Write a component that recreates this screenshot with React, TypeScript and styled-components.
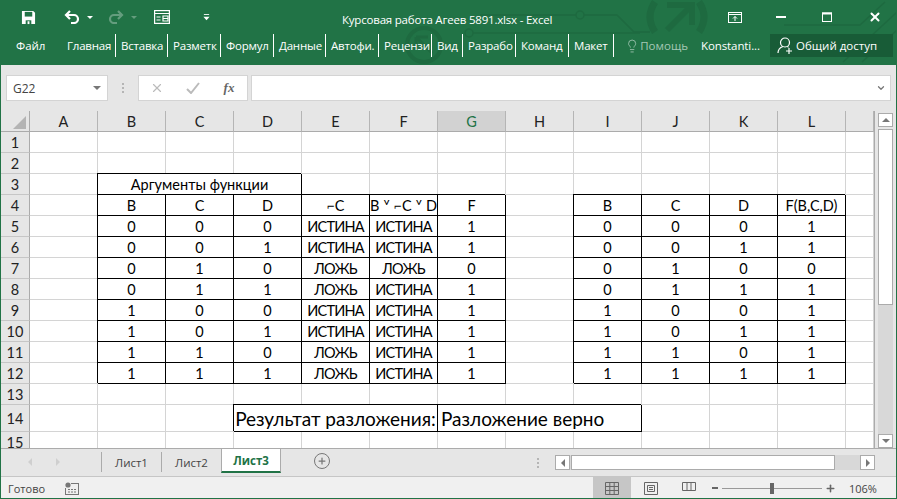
import { createGlobalStyle, styled } from "styled-components";
import { ChevronDown, Lightbulb, Plus, X } from "lucide-react";

const GlobalStyle = createGlobalStyle`
  html, body {
    margin: 0;
    padding: 0;
    overflow: hidden;
    background: #e6e6e6;
  }
`;

const ui = `"Open Sans", "Noto Sans", sans-serif`;
const cellFont = `Lato, "Liberation Sans", sans-serif`;

const Window = styled.div`
  width: 897px;
  height: 499px;
  box-sizing: border-box;
  border: 1px solid #217346;
  border-top: 0;
  display: flex;
  flex-direction: column;
  background: #e6e6e6;
  overflow: hidden;
`;

/* title bar + ribbon tabs */
const Head = styled.header`
  position: relative;
  height: 65px;
  margin: 0 -1px;
  flex: none;
  background: #217346;
  color: #fff;
  font-family: ${ui};
  display: flex;
  flex-direction: column;
`;
const Pattern = styled.svg`
  position: absolute;
  inset: 0;
  pointer-events: none;
`;
const TitleRow = styled.div`
  position: relative;
  height: 34px;
  display: flex;
  align-items: center;
`;
const Qat = styled.div`
  width: 330px;
  flex: none;
  padding-left: 21px;
  box-sizing: border-box;
  display: flex;
  align-items: center;
  height: 30px;
`;
const QatButton = styled.span<{ $w: number; $dim?: boolean }>`
  width: ${(p) => p.$w}px;
  flex: none;
  display: flex;
  align-items: center;
  opacity: ${(p) => (p.$dim ? 0.3 : 1)};
`;
const QatCaret = styled.span`
  width: 0;
  height: 0;
  border-left: 3px solid transparent;
  border-right: 3px solid transparent;
  border-top: 3px solid #fff;
`;
const Title = styled.div`
  width: 272px;
  flex: none;
  padding: 5px 0 0 12px;
  box-sizing: border-box;
  font-size: 11.5px;
  letter-spacing: -0.2px;
  white-space: nowrap;
`;
const WinButtons = styled.div`
  margin-left: auto;
  height: 30px;
  width: 169px;
  flex: none;
  display: flex;
  align-items: center;
`;
const WinButton = styled.span<{ $w: number }>`
  width: ${(p) => p.$w}px;
  flex: none;
  display: flex;
  align-items: center;
`;
const TabRow = styled.nav`
  position: relative;
  height: 23px;
  display: flex;
  align-items: center;
  font-size: 11.5px;
`;
const FileTab = styled.span`
  width: 62px;
  flex: none;
  padding-left: 16px;
  box-sizing: border-box;
`;
const RibbonTab = styled.span<{ $w: number }>`
  width: ${(p) => p.$w}px;
  height: 23px;
  line-height: 23px;
  flex: none;
  box-sizing: border-box;
  padding-left: 5px;
  overflow: hidden;
  white-space: nowrap;
  border-right: 1px solid #fff;
  letter-spacing: -0.2px;
`;
const Help = styled.span`
  width: 63px;
  flex: none;
  margin-left: 11px;
  display: flex;
  align-items: center;
  gap: 1px;
  overflow: hidden;
  white-space: nowrap;
  color: #a5c8b5;
`;
const User = styled.span`
  width: 69px;
  flex: none;
  margin-left: 13px;
  white-space: nowrap;
  letter-spacing: -0.1px;
`;
const Share = styled.span`
  width: 123px;
  height: 23px;
  flex: none;
  background: #185c37;
  display: flex;
  align-items: center;
  gap: 3px;
  padding-left: 7px;
  box-sizing: border-box;
  white-space: nowrap;
`;

/* name box and formula bar */
const FormulaRow = styled.div`
  height: 46px;
  flex: none;
  box-sizing: border-box;
  padding: 10px 5px;
  display: flex;
  font-family: ${ui};
  color: #444;
`;
const NameBox = styled.div`
  width: 102px;
  flex: none;
  box-sizing: border-box;
  background: #fff;
  border: 1px solid #d4d4d4;
  padding: 0 6px;
  font-size: 12px;
  display: flex;
  align-items: center;
  justify-content: space-between;
`;
const Caret = styled.span`
  width: 0;
  height: 0;
  border-left: 4px solid transparent;
  border-right: 4px solid transparent;
  border-top: 4px solid #777;
`;
const Grip = styled.div`
  width: 30px;
  flex: none;
  display: flex;
  flex-direction: column;
  align-items: center;
  justify-content: center;
  gap: 2px;
`;
const GripDot = styled.i`
  width: 2px;
  height: 2px;
  background: #b5b5b5;
`;
const FxBox = styled.div`
  width: 110px;
  flex: none;
  box-sizing: border-box;
  background: #fff;
  border: 1px solid #d4d4d4;
  display: flex;
  align-items: center;
  color: #bbb;
`;
const FxSlot = styled.span`
  width: 36px;
  flex: none;
  display: flex;
  justify-content: center;
`;
const FxLabel = styled.span`
  font-family: "Liberation Serif", serif;
  font-style: italic;
  font-weight: 700;
  font-size: 13px;
  color: #666;
`;
const FormulaInput = styled.div`
  flex: 1;
  margin-left: 3px;
  box-sizing: border-box;
  background: #fff;
  border: 1px solid #d4d4d4;
  display: flex;
  align-items: center;
  justify-content: flex-end;
  padding-right: 4px;
  color: #777;
`;

/* sheet */
const SheetArea = styled.div`
  height: 337px;
  flex: none;
  display: flex;
  overflow: hidden;
`;
const Grid = styled.div`
  width: 873px;
  flex: none;
  display: grid;
  grid-template-columns: 29px repeat(12, 68px) 28px;
  grid-template-rows: 21px repeat(13, 21px) 27px 21px;
  background: #fff;
  font-family: ${cellFont};
  font-size: 14.5px;
  color: #000;
  overflow: hidden;
  align-content: start;
  border-right: 1px solid #ababab;
`;
const Corner = styled.div`
  background: #e6e6e6;
  border-right: 1px solid #ababab;
  border-bottom: 1px solid #ababab;
  box-sizing: border-box;
  display: flex;
  align-items: flex-end;
  justify-content: flex-end;
  padding: 0 3px 2px 0;
`;
const CornerMark = styled.span`
  width: 0;
  height: 0;
  border-left: 13px solid transparent;
  border-bottom: 13px solid #b4b4b4;
`;
const ColHead = styled.div<{ $active?: boolean }>`
  background: ${(p) => (p.$active ? "#d2d2d2" : "#e6e6e6")};
  color: ${(p) => (p.$active ? "#217346" : "#222")};
  border-right: 1px solid #b5b5b5;
  border-bottom: 1px solid #ababab;
  box-sizing: border-box;
  display: flex;
  align-items: center;
  justify-content: center;
`;
const RowHead = styled.div`
  background: #e6e6e6;
  color: #222;
  border-right: 1px solid #ababab;
  border-bottom: 1px solid #c6c6c6;
  box-sizing: border-box;
  display: flex;
  align-items: center;
  justify-content: center;
`;
const Cell = styled.div<{ $span?: number; $boxed?: boolean; $big?: boolean; $left?: boolean; $tight?: boolean }>`
  grid-column: span ${(p) => p.$span ?? 1};
  position: ${(p) => (p.$boxed ? "relative" : "static")};
  z-index: ${(p) => (p.$boxed ? 1 : 0)};
  box-sizing: border-box;
  border-right: 1px solid ${(p) => (p.$boxed ? "#000" : "#d4d4d4")};
  border-bottom: 1px solid ${(p) => (p.$boxed ? "#000" : "#d4d4d4")};
  box-shadow: ${(p) => (p.$boxed ? "-1px -1px 0 0 #000" : "none")};
  display: flex;
  align-items: center;
  justify-content: ${(p) => (p.$left ? "flex-start" : "center")};
  padding-left: ${(p) => (p.$left ? 3 : 0)}px;
  font-size: ${(p) => (p.$big ? 19 : 14.5)}px;
  letter-spacing: ${(p) => (p.$tight ? -0.8 : 0)}px;
  white-space: nowrap;
  overflow: hidden;
`;

/* vertical scrollbar */
const VScroll = styled.div`
  flex: 1;
  padding: 2px 3px 0;
  display: flex;
  flex-direction: column;
  background: #e6e6e6;
`;
const ScrollButton = styled.div<{ $w?: number; $h?: number }>`
  width: ${(p) => (p.$w ? `${p.$w}px` : "auto")};
  height: ${(p) => (p.$h ? `${p.$h}px` : "auto")};
  flex: none;
  box-sizing: border-box;
  background: #fff;
  border: 1px solid #ababab;
  display: flex;
  align-items: center;
  justify-content: center;
`;
const Tri = styled.span<{ $dir: "up" | "down" | "left" | "right" }>`
  width: 0;
  height: 0;
  ${(p) =>
    p.$dir === "up" || p.$dir === "down"
      ? `border-left: 4px solid transparent; border-right: 4px solid transparent;
         border-${p.$dir === "up" ? "bottom" : "top"}: 4px solid #777;`
      : `border-top: 4px solid transparent; border-bottom: 4px solid transparent;
         border-${p.$dir === "left" ? "right" : "left"}: 4px solid #777;`}
`;
const VThumb = styled.div`
  height: 176px;
  flex: none;
  margin-top: 2px;
  box-sizing: border-box;
  background: #fff;
  border: 1px solid #ababab;
`;
const VTrack = styled.div`
  flex: 1;
  background: #d8d8d8;
`;

/* sheet tabs */
const SheetBar = styled.div`
  height: 28px;
  flex: none;
  box-sizing: border-box;
  display: flex;
  align-items: flex-start;
  border-top: 1px solid #ababab;
  font-family: ${ui};
  color: #444;
  font-size: 11.5px;
`;
const SheetNav = styled.div`
  width: 101px;
  height: 20px;
  flex: none;
  display: flex;
  align-items: center;
  padding-left: 27px;
  gap: 24px;
  box-sizing: border-box;
  border-right: 1px solid #ababab;
  margin-top: 3px;
`;
const NavArrow = styled.span`
  width: 0;
  height: 0;
  border-top: 4px solid transparent;
  border-bottom: 4px solid transparent;
`;
const NavLeft = styled(NavArrow)`
  border-right: 4px solid #cfcfcf;
`;
const NavRight = styled(NavArrow)`
  border-left: 4px solid #cfcfcf;
`;
const SheetTab = styled.span<{ $w: number; $plain?: boolean }>`
  width: ${(p) => p.$w}px;
  height: 20px;
  margin-top: 3px;
  flex: none;
  box-sizing: border-box;
  border-right: ${(p) => (p.$plain ? "0" : "1px solid #ababab")};
  display: flex;
  align-items: center;
  justify-content: center;
`;
const ActiveSheetTab = styled.span`
  width: 60px;
  height: 24px;
  flex: none;
  box-sizing: border-box;
  background: #fff;
  border: 1px solid #ababab;
  border-top: 0;
  border-bottom: 2px solid #217346;
  color: #217346;
  font-weight: 700;
  display: flex;
  align-items: center;
  justify-content: center;
`;
const AddSheet = styled.span`
  width: 16px;
  height: 16px;
  margin: 4px 0 0 33px;
  flex: none;
  box-sizing: border-box;
  border: 1.5px solid #777;
  border-radius: 50%;
  display: flex;
  align-items: center;
  justify-content: center;
  color: #777;
`;
const HGrip = styled(Grip)`
  width: 16px;
  margin: 5px 0 0 200px;
  height: 18px;
`;
const HScroll = styled.div`
  width: 320px;
  margin: 6px 0 0 9px;
  height: 15px;
  flex: none;
  display: flex;
  background: #d8d8d8;
`;
const HThumb = styled.div`
  width: 264px;
  flex: none;
  box-sizing: border-box;
  background: #fff;
  border: 1px solid #ababab;
  margin-left: 1px;
`;
const HGap = styled.div`
  flex: 1;
`;

/* status bar */
const StatusBar = styled.footer`
  flex: 1;
  box-sizing: border-box;
  background: #f0f0f0;
  border-top: 1px solid #c6c6c6;
  display: flex;
  align-items: center;
  font-family: ${ui};
  font-size: 11px;
  color: #444;
`;
const Ready = styled.span`
  width: 64px;
  flex: none;
  padding-left: 7px;
  box-sizing: border-box;
`;
const StatusSpacer = styled.div`
  flex: 1;
`;
const ViewButton = styled.span<{ $active?: boolean }>`
  width: 38.3px;
  height: 22px;
  flex: none;
  background: ${(p) => (p.$active ? "#c6c6c6" : "transparent")};
  display: flex;
  align-items: center;
  justify-content: center;
`;
const Slider = styled.div`
  width: 100px;
  height: 1px;
  flex: none;
  background: #999;
  display: flex;
  align-items: center;
  justify-content: center;
`;
const SliderThumb = styled.span`
  width: 4px;
  height: 11px;
  background: #666;
`;
const ZoomSign = styled.span<{ $w: number }>`
  width: ${(p) => p.$w}px;
  flex: none;
  display: flex;
  justify-content: center;
  color: #666;
`;
const ZoomValue = styled.span`
  width: 57px;
  flex: none;
  padding-left: 10px;
  box-sizing: border-box;
`;

const columns = ["A", "B", "C", "D", "E", "F", "G", "H", "I", "J", "K", "L"];

const rows = [
  ["0", "0", "0", "ИСТИНА", "ИСТИНА", "1", "0", "0", "0", "1"],
  ["0", "0", "1", "ИСТИНА", "ИСТИНА", "1", "0", "0", "1", "1"],
  ["0", "1", "0", "ЛОЖЬ", "ЛОЖЬ", "0", "0", "1", "0", "0"],
  ["0", "1", "1", "ЛОЖЬ", "ИСТИНА", "1", "0", "1", "1", "1"],
  ["1", "0", "0", "ИСТИНА", "ИСТИНА", "1", "1", "0", "0", "1"],
  ["1", "0", "1", "ИСТИНА", "ИСТИНА", "1", "1", "0", "1", "1"],
  ["1", "1", "0", "ЛОЖЬ", "ИСТИНА", "1", "1", "1", "0", "1"],
  ["1", "1", "1", "ЛОЖЬ", "ИСТИНА", "1", "1", "1", "1", "1"],
];

function Blank({ n }: { n: number }) {
  return (
    <>
      {Array.from({ length: n }, (_, i) => (
        <Cell key={i} />
      ))}
    </>
  );
}

function Row({ n, values }: { n: number; values: string[] }) {
  return (
    <>
      <RowHead>{n}</RowHead>
      <Cell />
      {values.slice(0, 6).map((v, i) => (
        <Cell key={i} $boxed $tight={v.length > 1}>
          {v}
        </Cell>
      ))}
      <Cell />
      {values.slice(6).map((v, i) => (
        <Cell key={i} $boxed>
          {v}
        </Cell>
      ))}
      <Cell />
    </>
  );
}

function SheetGrid() {
  return (
    <Grid>
      <Corner>
        <CornerMark />
      </Corner>
      {columns.map((c) => (
        <ColHead key={c} $active={c === "G"}>
          {c}
        </ColHead>
      ))}
      <ColHead />

      <RowHead>1</RowHead>
      <Blank n={13} />
      <RowHead>2</RowHead>
      <Blank n={13} />

      <RowHead>3</RowHead>
      <Cell />
      <Cell $span={3} $boxed>
        Аргументы функции
      </Cell>
      <Blank n={9} />

      <RowHead>4</RowHead>
      <Cell />
      <Cell $boxed>B</Cell>
      <Cell $boxed>C</Cell>
      <Cell $boxed>D</Cell>
      <Cell $boxed>⌐C</Cell>
      <Cell $boxed>B ˅ ⌐C ˅ D</Cell>
      <Cell $boxed>F</Cell>
      <Cell />
      <Cell $boxed>B</Cell>
      <Cell $boxed>C</Cell>
      <Cell $boxed>D</Cell>
      <Cell $boxed>F(B,C,D)</Cell>
      <Cell />

      {rows.map((row, i) => (
        <Row key={i} n={i + 5} values={row} />
      ))}

      <RowHead>13</RowHead>
      <Blank n={13} />

      <RowHead>14</RowHead>
      <Blank n={3} />
      <Cell $span={3} $boxed $big>
        Результат разложения:
      </Cell>
      <Cell $span={3} $boxed $big $left>
        Разложение верно
      </Cell>
      <Blank n={4} />

      <RowHead>15</RowHead>
      <Blank n={13} />
    </Grid>
  );
}

export default function App() {
  return (
    <Window>
      <GlobalStyle />
      <Head>
        <Pattern width="897" height="65" viewBox="0 0 897 65" fill="none" stroke="#1e6a40" strokeWidth="1.5">
          <path d="M655 2 Q645 17 655 32" strokeWidth="7" />
          <path d="M699 2 Q709 17 699 32" strokeWidth="7" />
          <path d="M667 30 L692 5 M667 5 H692 V25" strokeWidth="6" />
          <path d="M480 15 H576 M584 15 H617 L634 32 H650" />
          <circle cx="580" cy="15" r="4" />
          <path d="M473 33 H560 L590 33 H640" />
          <circle cx="469" cy="33" r="4" />
          <path d="M784 25 H860 L885 2 M843 62 L897 12 M862 62 L897 30" />
          <circle cx="424" cy="45" r="17" strokeWidth="4" />
          <path d="M416 37 H428 M416 37 V49 M416 37 L432 53" strokeWidth="3" />
        </Pattern>
        <TitleRow>
          <Qat>
            <QatButton $w={43}>
              <svg width="15" height="15" viewBox="0 0 16 16">
                <path d="M1 1h12l2 2v12H1z" fill="#fff" />
                <rect x="4" y="2" width="8" height="5" fill="#217346" />
                <rect x="5" y="11" width="6" height="4" fill="#217346" />
                <rect x="7" y="12" width="2" height="3" fill="#fff" />
              </svg>
            </QatButton>
            <QatButton $w={23}>
              <svg width="16" height="14" viewBox="0 0 16 14" fill="none" stroke="#fff" strokeWidth="2.2">
                <path d="M2 5h8a4 4 0 0 1 0 8H7" />
                <path d="M6 1 2 5l4 4" />
              </svg>
            </QatButton>
            <QatButton $w={21}>
              <QatCaret />
            </QatButton>
            <QatButton $w={23} $dim>
              <svg width="16" height="14" viewBox="0 0 16 14" fill="none" stroke="#fff" strokeWidth="2.2">
                <path d="M14 5H6a4 4 0 0 0 0 8h3" />
                <path d="m10 1 4 4-4 4" />
              </svg>
            </QatButton>
            <QatButton $w={23} $dim>
              <QatCaret />
            </QatButton>
            <QatButton $w={49}>
              <svg width="16" height="14" viewBox="0 0 16 14" fill="none" stroke="#fff" strokeWidth="1.2">
                <rect x="0.6" y="0.6" width="14.8" height="12.8" />
                <path d="M0.6 3.5h14.8M2.5 7h4M9 6h5v5H9zM9 8.5h5M2.5 10h4" />
              </svg>
            </QatButton>
            <QatButton $w={12}>
              <svg width="7" height="7" viewBox="0 0 8 8" fill="#fff">
                <rect x="1" y="0" width="6" height="1" />
                <path d="M0.5 3h7L4 7z" />
              </svg>
            </QatButton>
          </Qat>
          <Title>Курсовая работа Агеев 5891.xlsx - Excel</Title>
          <WinButtons>
            <WinButton $w={48}>
              <svg width="14" height="11" viewBox="0 0 14 11" fill="none" stroke="#fff">
                <rect x="0.5" y="0.5" width="13" height="10" />
                <path d="M0.5 2.500h13M7 9V4.500M5 6.500l2-2 2 2" />
              </svg>
            </WinButton>
            <WinButton $w={46}>
              <svg width="10" height="2" viewBox="0 0 10 2">
                <rect width="10" height="2" fill="#fff" />
              </svg>
            </WinButton>
            <WinButton $w={46}>
              <svg width="10" height="10" viewBox="0 0 10 10" fill="none" stroke="#fff">
                <rect x="0.5" y="1" width="9" height="8.500" strokeWidth="1" />
                <path d="M0 1.500h10" strokeWidth="2" />
              </svg>
            </WinButton>
            <WinButton $w={20}>
              <X size={14} strokeWidth={3.4} color="#fff" />
            </WinButton>
          </WinButtons>
        </TitleRow>
        <TabRow>
          <FileTab>Файл</FileTab>
          {[
            ["Главная", 54],
            ["Вставка", 52],
            ["Разметк", 53],
            ["Формул", 53],
            ["Данные", 52],
            ["Автофи.", 53],
            ["Рецензи", 53],
            ["Вид", 31],
            ["Разрабо", 53],
            ["Команд", 53],
            ["Макет", 45],
          ].map(([label, w]) => (
            <RibbonTab key={label} $w={w as number}>
              {label}
            </RibbonTab>
          ))}
          <Help>
            <Lightbulb size={16} strokeWidth={1.4} />
            Помощь
          </Help>
          <User>Konstanti...</User>
          <Share>
            <svg width="16" height="17" viewBox="0 0 16 17" fill="none" stroke="#fff" strokeWidth="1.2">
              <circle cx="8" cy="5.500" r="4.500" />
              <path d="M1 16c0-3 2-5.500 5-6.500M10 9.500c.6.2 1.100.4 1.600.8M9 14h6M12 11v6" />
            </svg>
            Общий доступ
          </Share>
        </TabRow>
      </Head>

      <FormulaRow>
        <NameBox>
          G22
          <Caret />
        </NameBox>
        <Grip>
          <GripDot />
          <GripDot />
          <GripDot />
        </Grip>
        <FxBox>
          <FxSlot>
            <X size={14} strokeWidth={2} />
          </FxSlot>
          <FxSlot>
            <svg width="14" height="12" viewBox="0 0 14 12" fill="none" stroke="#bbb" strokeWidth="2">
              <path d="m1 7 4 4 8-10" />
            </svg>
          </FxSlot>
          <FxSlot>
            <FxLabel>fx</FxLabel>
          </FxSlot>
        </FxBox>
        <FormulaInput>
          <ChevronDown size={10} strokeWidth={3} />
        </FormulaInput>
      </FormulaRow>

      <SheetArea>
        <SheetGrid />
        <VScroll>
          <ScrollButton $h={14}>
            <Tri $dir="up" />
          </ScrollButton>
          <VThumb />
          <VTrack />
          <ScrollButton $h={14}>
            <Tri $dir="down" />
          </ScrollButton>
        </VScroll>
      </SheetArea>

      <SheetBar>
        <SheetNav>
          <NavLeft />
          <NavRight />
        </SheetNav>
        <SheetTab $w={60}>Лист1</SheetTab>
        <SheetTab $w={59} $plain>
          Лист2
        </SheetTab>
        <ActiveSheetTab>Лист3</ActiveSheetTab>
        <AddSheet>
          <Plus size={10} strokeWidth={3} />
        </AddSheet>
        <HGrip>
          <GripDot />
          <GripDot />
          <GripDot />
        </HGrip>
        <HScroll>
          <ScrollButton $w={15}>
            <Tri $dir="left" />
          </ScrollButton>
          <HThumb />
          <HGap />
          <ScrollButton $w={15}>
            <Tri $dir="right" />
          </ScrollButton>
        </HScroll>
      </SheetBar>

      <StatusBar>
        <Ready>Готово</Ready>
        <svg width="14" height="13" viewBox="0 0 14 13">
          <circle cx="3" cy="3" r="2.600" fill="#777" />
          <path d="M6 1h8v12H0V6h1v6h12V2H6z" fill="#777" />
          <path d="M3 7h2v1H3zm3 0h2v1H6zm3 0h2v1H9zM3 9.500h2v1H3zm3 0h2v1H6zm3 0h2v1H9z" fill="#777" />
        </svg>
        <StatusSpacer />
        <ViewButton $active>
          <svg width="14" height="13" viewBox="0 0 14 13" fill="none" stroke="#666">
            <path d="M.5.500h13v12H.5zM.5 4.500h13M.5 8.500h13M4.800.500v12M9.200.500v12" />
          </svg>
        </ViewButton>
        <ViewButton>
          <svg width="14" height="13" viewBox="0 0 14 13" fill="none" stroke="#666">
            <path d="M.5.500h13v12H.5zM3.500 3.500h7v6h-7zM5 5.500h4M5 7.500h4" />
          </svg>
        </ViewButton>
        <ViewButton>
          <svg width="14" height="13" viewBox="0 0 14 13" fill="none" stroke="#666">
            <path d="M.5.500h13v8H.5zM5 .500v8M9 .500v8" />
          </svg>
        </ViewButton>
        <ZoomSign $w={14}>
          <svg width="6" height="2" viewBox="0 0 6 2">
            <rect width="6" height="2" fill="#666" />
          </svg>
        </ZoomSign>
        <Slider>
          <SliderThumb />
        </Slider>
        <ZoomSign $w={17}>
          <Plus size={11} strokeWidth={3.4} />
        </ZoomSign>
        <ZoomValue>106%</ZoomValue>
      </StatusBar>
    </Window>
  );
}
